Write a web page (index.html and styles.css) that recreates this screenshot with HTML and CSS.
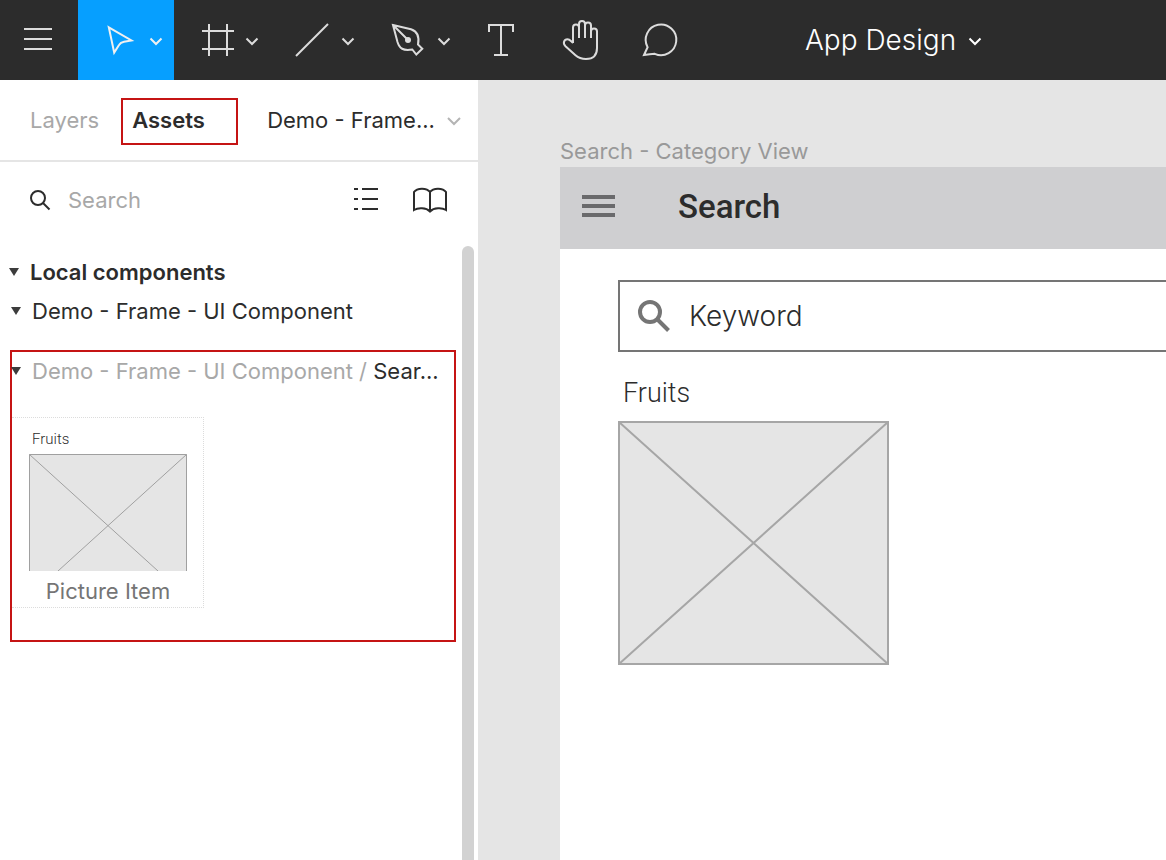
FILE: index.html
```html
<!DOCTYPE html>
<html lang="en">
<head>
<meta charset="utf-8">
<title>App Design</title>
<link rel="stylesheet" href="styles.css">
</head>
<body>
<header class="toolbar">
  <button class="tool tool-menu" aria-label="Menu">
    <svg class="icon" viewBox="0 0 40 40"><path d="M6 9H34M6 19H34M6 29H34"/></svg>
  </button>
  <button class="tool tool-split active" aria-label="Move">
    <svg class="icon" viewBox="0 0 40 40"><path d="M6.800 7.300 29.500 20.500 22 21.800Q18.500 22.500 17 25L12.200 32.600Z"/></svg>
    <svg class="chevron" viewBox="0 0 12 8"><path d="M0.500 1.500 6 7 11.500 1.500"/></svg>
  </button>
  <button class="tool tool-split" aria-label="Frame">
    <svg class="icon" viewBox="0 0 40 40"><path d="M11 4V36M29 4V36M4 11H36M4 29H36"/></svg>
    <svg class="chevron" viewBox="0 0 12 8"><path d="M0.500 1.500 6 7 11.500 1.500"/></svg>
  </button>
  <button class="tool tool-split" aria-label="Line">
    <svg class="icon" viewBox="0 0 40 40"><path d="M2 36 34 4"/></svg>
    <svg class="chevron" viewBox="0 0 12 8"><path d="M0.500 1.500 6 7 11.500 1.500"/></svg>
  </button>
  <button class="tool tool-split" aria-label="Pen">
    <svg class="icon" viewBox="0 0 40 40"><path d="M3 5 21 9.300C27.500 11.500 29.500 17 28 24.500L32.300 28.700 26.300 34.500 22.300 29.500C13 31 9.500 28.500 7.500 22ZM3 5 17 19"/><circle class="solid" cx="18" cy="20" r="3"/></svg>
    <svg class="chevron" viewBox="0 0 12 8"><path d="M0.500 1.500 6 7 11.500 1.500"/></svg>
  </button>
  <button class="tool" aria-label="Text">
    <svg class="icon" viewBox="0 0 40 40"><path d="M7 12V5H31V12M19 5V35M12 35H26"/></svg>
  </button>
  <button class="tool" aria-label="Hand">
    <svg class="icon" viewBox="0 0 40 40"><path d="M11 23V7.500a3 3 0 0 1 6 0V18M17 7.500V4a3 3 0 0 1 6 0V18M23 5.500a3 3 0 0 1 6 0V18M29 11.500a3 3 0 0 1 6 0V28C35 35 31 39 24 39C19.500 39 16.500 38 13.500 35.300L3.500 26.300C0.500 23.300 2 19.300 5.500 19.300C8 19.300 9 21.500 11 22.800"/></svg>
  </button>
  <button class="tool" aria-label="Comment">
    <svg class="icon" viewBox="0 0 40 40"><path d="M2 35 5.600 27.200A15.300 15.300 0 1 1 12.800 33.800Q8 34.300 2 35Z"/></svg>
  </button>
  <button class="file-title">App Design
    <svg class="chevron" viewBox="0 0 12 8"><path d="M0.500 1.500 6 7 11.500 1.500"/></svg>
  </button>
</header>
<main class="workspace">
  <aside class="sidebar">
    <nav class="tabs">
      <button class="tab muted">Layers</button>
      <button class="tab tab-marked">Assets</button>
      <button class="tab page-picker">Demo - Frame...
        <svg class="chevron" viewBox="0 0 12 8"><path d="M0 1 6 7 12 1"/></svg>
      </button>
    </nav>
    <div class="search-row">
      <svg class="search-icon" viewBox="0 0 20 20"><circle cx="8" cy="8" r="7"/><path d="M13 13 19.500 19.500"/></svg>
      <input class="search-input" type="search" placeholder="Search" aria-label="Search assets">
      <button class="view-button" aria-label="List view">
        <svg class="list-icon" viewBox="0 0 24 24"><path d="M0 1H4M8 1H24M0 11H4M8 11H24M0 21H4M8 21H24"/></svg>
      </button>
      <button class="view-button" aria-label="Libraries">
        <svg class="book-icon" viewBox="0 0 36 26"><path d="M18 25V5C15 0.500 5 0.500 2 5V23C6 20.500 14 20.500 18 24.500C22 20.500 30 20.500 34 23V5C31 0.500 21 0.500 18 5"/></svg>
      </button>
    </div>
    <div class="asset-scroll">
      <div class="asset-list">
        <h2 class="group group-title"><svg class="caret" viewBox="0 0 12 10"><path d="M1 1H11L6 9Z"/></svg>Local components</h2>
        <h3 class="group"><svg class="caret" viewBox="0 0 12 10"><path d="M1 1H11L6 9Z"/></svg>Demo - Frame - UI Component</h3>
        <section class="marked-section">
          <h3 class="group"><svg class="caret" viewBox="0 0 12 10"><path d="M1 1H11L6 9Z"/></svg><span><span class="muted">Demo - Frame - UI Component /</span> Sear...</span></h3>
          <figure class="component">
            <span class="component-label">Fruits</span>
            <svg class="component-image" viewBox="0 0 158 117"><path d="M0.500 117V0.500H157.500V117M0.500 0.500 129 117M157.500 0.500 29 117"/></svg>
            <figcaption class="component-name">Picture Item</figcaption>
          </figure>
        </section>
      </div>
      <div class="scroll-thumb"></div>
    </div>
  </aside>
  <section class="canvas">
    <div class="frame-label">Search - Category View</div>
    <article class="frame">
      <div class="frame-header">
        <svg class="frame-menu" viewBox="0 0 34 24"><path d="M0 2H33M0 11H33M0 20H33"/></svg>
        <h1 class="frame-title">Search</h1>
      </div>
      <div class="frame-body">
        <label class="keyword">
          <svg class="keyword-icon" viewBox="0 0 34 34"><circle cx="13" cy="13" r="10"/><path d="M20.500 20.500 31.500 31.500"/></svg>
          <input class="keyword-input" type="text" value="Keyword" aria-label="Keyword">
        </label>
        <div class="item-label">Fruits</div>
        <svg class="item-image" viewBox="0 0 271 244"><path d="M1 1H270V243H1ZM1 1 270 243M270 1 1 243"/></svg>
      </div>
    </article>
  </section>
</main>
</body>
</html>
```
FILE: styles.css
```css
* { box-sizing: border-box; }

body {
  margin: 0;
  min-height: 100vh;
  display: flex;
  flex-direction: column;
  overflow-x: hidden;
  background: #fff;
  color: #2c2c2c;
  font: 400 22px/28px Inter, sans-serif;
}

button, input { font: inherit; color: inherit; border: 0; padding: 0; background: none; }
input { min-width: 0; outline: none; }
h1, h2, h3, figure { margin: 0; font: inherit; }
svg { display: block; flex: none; overflow: visible; fill: none; stroke: currentColor; stroke-width: 2; }

.toolbar { display: flex; height: 80px; background: #2c2c2c; color: #dcdcdc; }
.tool { flex: none; display: flex; align-items: center; justify-content: center; width: 80px; }
.tool-menu { width: 78px; padding: 0 2px 0 0; }
.tool-split { width: 96px; gap: 8px; padding: 0 12px 0 24px; }
.active { background: #069fff; color: #f0f0f0; }
.icon { width: 40px; height: 40px; }
.solid { fill: currentColor; stroke: none; }
.chevron { width: 12px; height: 8px; margin-top: 2px; }
.file-title {
  display: flex;
  align-items: center;
  gap: 13px;
  margin-left: 103px;
  color: #fff;
  font-size: 28px;
  font-weight: 300;
  white-space: nowrap;
}

.workspace { flex: 1; display: flex; }
.sidebar { flex: none; width: 478px; display: flex; flex-direction: column; }
.muted { color: #a8a8a8; }

.tabs {
  display: flex;
  align-items: center;
  height: 82px;
  padding: 0 18px 0 30px;
  border-bottom: 2px solid #e5e5e5;
}
.tab { white-space: nowrap; }
.tab-marked {
  width: 117px;
  height: 47px;
  margin: 3px 0 0 22px;
  padding: 0 0 3px 9px;
  border: 2px solid #c51414;
  font-weight: 600;
  text-align: left;
}
.page-picker { display: flex; align-items: center; justify-content: space-between; flex: 1; margin-left: 29px; }
.page-picker .chevron { color: #b4b4b4; }

.search-row { display: flex; align-items: center; height: 76px; padding: 0 30px; }
.search-icon { width: 20px; height: 20px; }
.search-input { flex: 1; margin-left: 18px; }
.search-input::placeholder { color: #a8a8a8; opacity: 1; }
.list-icon { width: 24px; height: 24px; }
.book-icon { width: 36px; height: 26px; margin-left: 34px; }

.asset-scroll { flex: 1; display: flex; padding: 8px 4px 0 10px; }
.asset-list { flex: 1; padding: 12px 6px 0 0; }
.scroll-thumb { width: 12px; border-radius: 6px 6px 0 0; background: #d2d2d2; }
.group { display: flex; align-items: center; gap: 10px; height: 28px; white-space: nowrap; }
.group-title { margin: 0 0 11px -2px; font-weight: 600; }
.caret { width: 12px; height: 10px; fill: #3c3c3c; stroke: none; }

.marked-section {
  margin-top: 25px;
  padding: 5px 2px 32px 0;
  border: 2px solid #c51414;
}
.marked-section .group { margin-left: -2px; }
.component {
  display: flex;
  flex-direction: column;
  width: 192px;
  margin-top: 32px;
  padding: 9px 16px 2px 17px;
  border: 1px dotted #dcdcdc;
  border-left: 0;
}
.component-label { padding-left: 3px; font: 300 15px/24px Roboto, sans-serif; }
.component-image { width: 158px; height: 117px; margin-top: 3px; background: #e5e5e5; color: #a0a0a0; stroke-width: 1; overflow: hidden; }
.component-name { margin-top: 6px; color: #757575; text-align: center; }

.canvas { flex: 1; min-width: 0; display: flex; flex-direction: column; padding: 57px 0 0 82px; background: #e5e5e5; }
.frame-label { height: 30px; color: #999; white-space: nowrap; }
.frame { flex: 1; background: #fff; }
.frame-header { display: flex; align-items: center; gap: 62px; height: 82px; padding: 0 0 2px 22px; background: #cfcfd1; }
.frame-menu { width: 34px; height: 24px; color: #6a6a6c; stroke-width: 4; }
.frame-title { font: 500 33px/40px Roboto, sans-serif; }
.frame-body { padding: 31px 0 0 58px; }
.keyword {
  display: flex;
  align-items: center;
  gap: 18px;
  height: 72px;
  padding-left: 17px;
  border: 2px solid #757575;
  border-right: 0;
}
.keyword-icon { width: 34px; height: 34px; color: #757575; stroke-width: 4; }
.keyword-input { flex: 1; font-size: 28px; font-weight: 300; }
.item-label { margin: 25px 0 11px; padding-left: 5px; font: 300 27px/33px Roboto, sans-serif; }
.item-image { width: 271px; height: 244px; background: #e5e5e5; color: #a6a6a6; }
```
